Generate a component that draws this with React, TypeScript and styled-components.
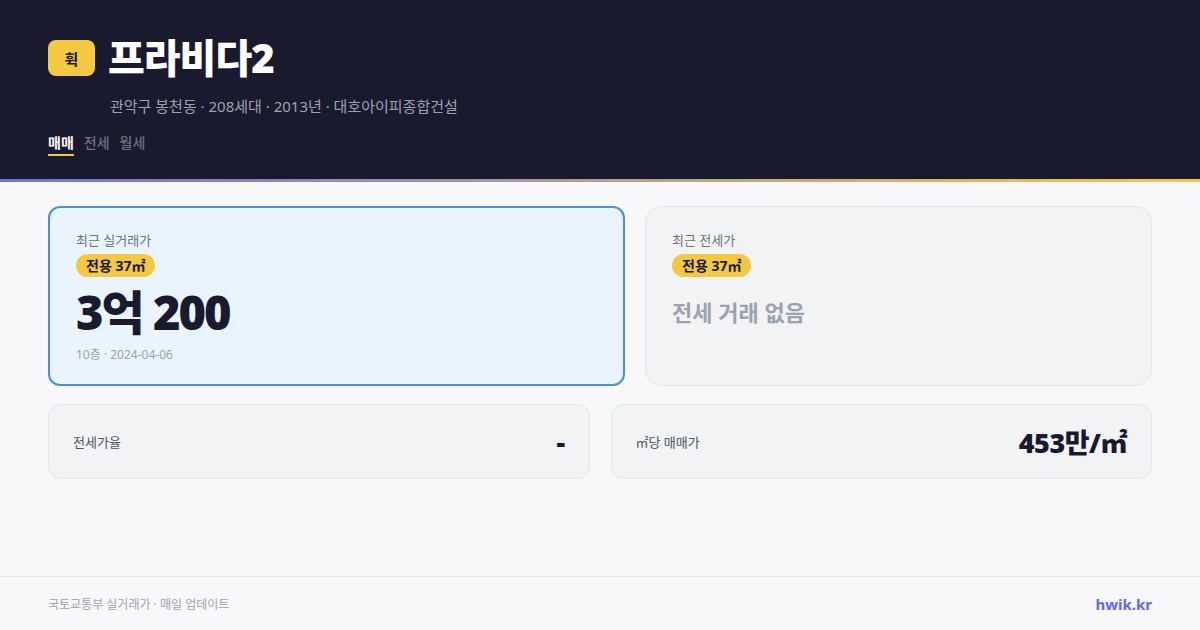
import styled, { createGlobalStyle } from 'styled-components'

const GlobalStyle = createGlobalStyle`
  html, body {
    margin: 0;
    padding: 0;
    background: #f8f8fa;
    font-family: 'Noto Sans', 'Noto Sans CJK KR', sans-serif;
  }
  * { box-sizing: border-box; }
`

const Page = styled.div`
  width: 1200px;
  height: 630px;
  display: flex;
  flex-direction: column;
  overflow: hidden;
`

const Header = styled.header`
  background: #1a1a2e;
  padding: 36px 48px 0;
  height: 182px;
  border-bottom: 3px solid transparent;
  border-image: linear-gradient(90deg, #7070e0, #f5c842) 1;
`

const TitleRow = styled.div`
  display: flex;
  align-items: center;
  gap: 13px;
`

const Logo = styled.div`
  width: 47px;
  height: 36px;
  border-radius: 8px;
  background: #f5c842;
  color: #1a1a2e;
  font-weight: 700;
  font-size: 15px;
  display: flex;
  align-items: center;
  justify-content: center;
`

const Title = styled.h1`
  margin: 0;
  color: #fff;
  font-size: 40px;
  font-weight: 900;
  line-height: 44px;
  letter-spacing: -1px;
`

const Subtitle = styled.div`
  margin: 15px 0 0 62px;
  color: #9ca3af;
  font-size: 15px;
  line-height: 22px;
`

const Tabs = styled.div`
  display: flex;
  gap: 10px;
  margin-top: 16px;
`

const Tab = styled.div<{ $active?: boolean }>`
  font-size: 14px;
  line-height: 20px;
  padding-bottom: 1px;
  font-weight: ${p => (p.$active ? 700 : 500)};
  color: ${p => (p.$active ? '#fff' : '#6b7280')};
  border-bottom: 2px solid ${p => (p.$active ? '#f5c842' : 'transparent')};
`

const Main = styled.main`
  flex: 1;
  padding: 24px 48px 0;
  display: flex;
  flex-direction: column;
  gap: 18px;
`

const TopGrid = styled.div`
  display: grid;
  grid-template-columns: 577px 507px;
  gap: 20px;
`

const BottomGrid = styled.div`
  display: grid;
  grid-template-columns: 1fr 1fr;
  gap: 21px;
`

const PriceCard = styled.div<{ $highlight?: boolean }>`
  height: 180px;
  border-radius: ${p => (p.$highlight ? '12px' : '16px')};
  border: ${p => (p.$highlight ? '2px solid #4a90d9' : '1px solid #e5e7eb')};
  background: ${p => (p.$highlight ? '#eaf4ff' : '#f2f3f5')};
  padding: ${p => (p.$highlight ? '22px 26px' : '23px 26px')};
  display: flex;
  flex-direction: column;
  align-items: flex-start;
`

const CardLabel = styled.div`
  font-size: 13px;
  line-height: 20px;
  color: #6b7280;
`

const AreaBadge = styled.span`
  margin-top: 4px;
  background: #f5c842;
  color: #1a1a2e;
  font-size: 14px;
  font-weight: 700;
  line-height: 23px;
  padding: 0 10px;
  border-radius: 12px;
`

const Price = styled.div`
  margin-top: 7px;
  font-size: 47px;
  font-weight: 900;
  line-height: 56px;
  color: #1a1a2e;
  letter-spacing: -2px;
`

const Empty = styled.div`
  margin-top: 19px;
  font-size: 22px;
  font-weight: 700;
  line-height: 32px;
  color: #9ca3af;
`

const Meta = styled.div`
  margin-top: 6px;
  font-size: 12px;
  line-height: 18px;
  color: #9ca3af;
`

const StatCard = styled.div`
  height: 75px;
  border: 1px solid #e5e7eb;
  border-radius: 12px;
  background: #f2f3f5;
  padding: 0 24px;
  display: flex;
  align-items: center;
  justify-content: space-between;
`

const StatLabel = styled.div`
  font-size: 13px;
  color: #4b5563;
`

const StatValue = styled.div`
  font-size: 27px;
  font-weight: 900;
  color: #1a1a2e;
  letter-spacing: -0.5px;
`

const Footer = styled.footer`
  height: 54px;
  border-top: 1px solid #e5e7eb;
  padding: 0 48px;
  display: flex;
  align-items: center;
  justify-content: space-between;
`

const Source = styled.div`
  font-size: 12px;
  color: #9ca3af;
`

const Brand = styled.div`
  font-size: 15px;
  font-weight: 700;
  color: #6366f1;
`

const App = () => {
  const tabs = ['매매', '전세', '월세']

  return (
    <Page>
      <GlobalStyle />
      <Header>
        <TitleRow>
          <Logo>휙</Logo>
          <Title>프라비다2</Title>
        </TitleRow>
        <Subtitle>관악구 봉천동 · 208세대 · 2013년 · 대호아이피종합건설</Subtitle>
        <Tabs>
          {tabs.map((t, i) => (
            <Tab key={t} $active={i === 0}>{t}</Tab>
          ))}
        </Tabs>
      </Header>
      <Main>
        <TopGrid>
          <PriceCard $highlight>
            <CardLabel>최근 실거래가</CardLabel>
            <AreaBadge>전용 37㎡</AreaBadge>
            <Price>3억 200</Price>
            <Meta>10층 · 2024-04-06</Meta>
          </PriceCard>
          <PriceCard>
            <CardLabel>최근 전세가</CardLabel>
            <AreaBadge>전용 37㎡</AreaBadge>
            <Empty>전세 거래 없음</Empty>
          </PriceCard>
        </TopGrid>
        <BottomGrid>
          <StatCard>
            <StatLabel>전세가율</StatLabel>
            <StatValue>-</StatValue>
          </StatCard>
          <StatCard>
            <StatLabel>㎡당 매매가</StatLabel>
            <StatValue>453만/㎡</StatValue>
          </StatCard>
        </BottomGrid>
      </Main>
      <Footer>
        <Source>국토교통부 실거래가 · 매일 업데이트</Source>
        <Brand>hwik.kr</Brand>
      </Footer>
    </Page>
  )
}

export default App
